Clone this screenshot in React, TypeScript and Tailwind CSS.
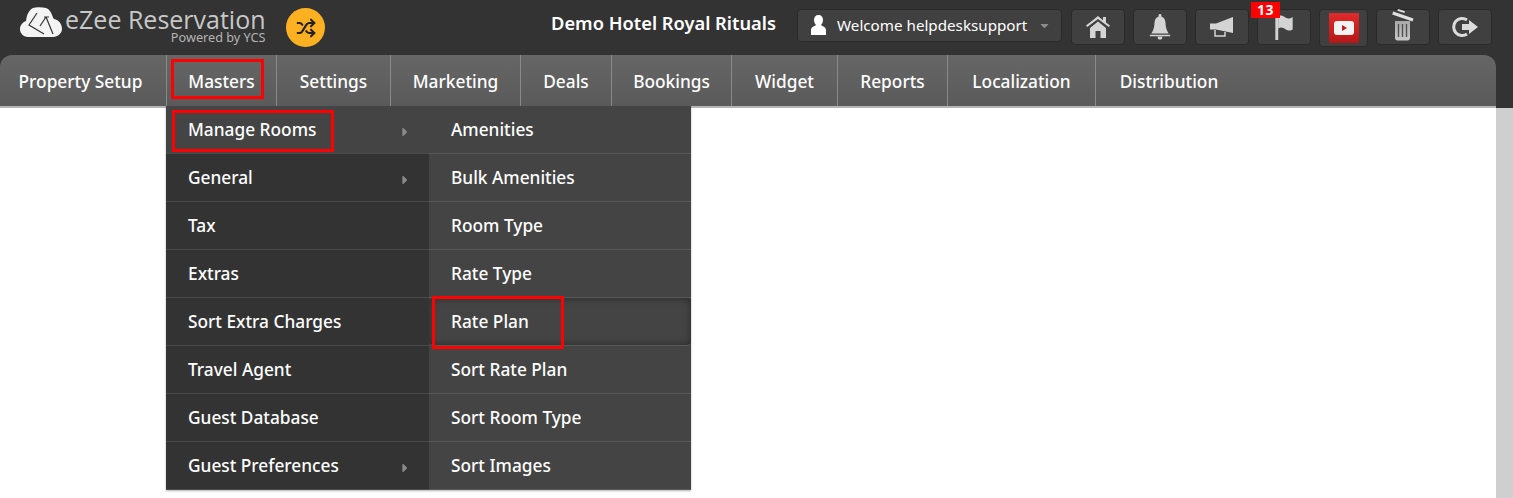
import { FaCaretRight, FaCaretDown } from 'react-icons/fa';
import { Shuffle } from 'lucide-react';

const navItems = [
  { label: 'Property Setup', width: 'w-[167px] pr-[5px]' },
  { label: 'Masters', width: 'w-[110px]' },
  { label: 'Settings', width: 'w-[114px]' },
  { label: 'Marketing', width: 'w-[130px]' },
  { label: 'Deals', width: 'w-[91px]' },
  { label: 'Bookings', width: 'w-[120px]' },
  { label: 'Widget', width: 'w-[106px]' },
  { label: 'Reports', width: 'w-[110px]' },
  { label: 'Localization', width: 'w-[148px]' },
  { label: 'Distribution', width: 'w-[146px]' },
];

const leftMenu = [
  { label: 'Manage Rooms', arrow: true },
  { label: 'General', arrow: true },
  { label: 'Tax' },
  { label: 'Extras' },
  { label: 'Sort Extra Charges' },
  { label: 'Travel Agent' },
  { label: 'Guest Database' },
  { label: 'Guest Preferences', arrow: true },
];

const rightMenu = ['Amenities', 'Bulk Amenities', 'Room Type', 'Rate Type', 'Rate Plan', 'Sort Rate Plan', 'Sort Room Type', 'Sort Images'];

function Logo() {
  return (
    <svg width="42" height="31" viewBox="0 0 42 31" fill="#f4f4f4">
      <path d="M8 30C3 30 0 26 0 22c0-4 3-7 6-8C7 7 9 3 13 1c3-1 9-1 13 0 3 1 5 4 6 7 1 2 1 3 2 4 5 1 8 5 8 10 0 4-4 8-9 8z" />
      <path d="M17 6 9 18l15 9M26 10l-6 9M26 10l7 17M24 10h5" stroke="#333" strokeWidth="1.200" fill="none" />
    </svg>
  );
}

function IconButton({ children }: { children: React.ReactNode }) {
  return (
    <button className="w-[54px] h-[36px] flex items-center justify-center rounded-[4px] bg-[#404040] border border-[#2a2a2a] text-[#d4d4d4]">
      {children}
    </button>
  );
}

export default function App() {
  return (
    <div className="relative w-[1513px] h-[498px] overflow-hidden bg-white font-['Noto_Sans','Open_Sans',sans-serif]">
      <div className="bg-[#333333] h-[108px]">
        <header className="h-[55px] flex items-start">
          <div className="ml-[20px] mt-[7px] flex items-start w-[266px]">
            <Logo />
            <div className="ml-[3px] flex flex-col items-end text-[#c8c8c8]">
              <span className="text-[25px] leading-[25px] font-['Open_Sans',sans-serif]">eZee Reservation</span>
              <span className="text-[12.700px] leading-[11px] text-[#b4b4b4]">Powered by YCS</span>
            </div>
          </div>
          <div className="mt-[8px] w-[39px] h-[39px] rounded-full bg-[#fdb022] flex items-center justify-center">
            <Shuffle size={20} strokeWidth={2.5} className="text-[#222]" />
          </div>
          <div className="ml-[226px] mt-[10px] w-[246px] text-[18.300px] leading-[26px] font-semibold text-white whitespace-nowrap">Demo Hotel Royal Rituals</div>
          <div className="mt-[9px] w-[265px] h-[33px] pb-[1px] flex items-center rounded-[4px] bg-[#404040] border border-[#2a2a2a] pl-[13px] text-white">
            <svg width="15" height="20" viewBox="0 0 15 20" fill="#ffffff">
              <path d="M7.500 0C10.500 0 12 2 12 5c0 2-1 4-2 5 1 1 5 2 5 5v5H0v-5c0-3 4-4 5-5-1-1-2-3-2-5 0-3 1.500-5 4.500-5z" />
            </svg>
            <span className="ml-[11px] text-[15.200px] whitespace-nowrap">Welcome helpdesksupport</span>
            <FaCaretDown size={13} className="ml-[11px] text-[#8c8c8c]" />
          </div>
          <div className="ml-[9px] mt-[9px] flex gap-[8px] items-start">
            <IconButton>
              <svg width="24" height="22" viewBox="0 0 24 22" fill="#d4d4d4">
                <path d="M12 0 0 9.500l1.200 1.500L12 3l10.800 8 1.200-1.500L20 6.500V1h-3v3.200z" />
                <path d="M4 12 12 5.500l8 6.500v10h-5.500v-7h-5v7H4z" />
              </svg>
            </IconButton>
            <IconButton>
              <svg width="22" height="26" viewBox="0 0 21 27" fill="#d4d4d4">
                <path d="M10.500 0c1 0 1.500.7 1.500 1.600v1.200c3 .8 4 3.200 4.200 6.200.2 4 .9 8 3.300 11.200H1.500C3.900 17 4.600 13 4.800 9c.2-3 1.200-5.400 4.200-6.200V1.600C9 .7 9.500 0 10.500 0z" />
                <path d="M0 21.500h21V23H0zM8 23.500h5c0 2-1 3-2.500 3S8 25.500 8 23.500z" />
              </svg>
            </IconButton>
            <IconButton>
              <svg width="24" height="20" viewBox="0 0 24 20" fill="#d4d4d4">
                <path d="M0 6.500h6L23 0v16L6 12.500H0z" />
                <path d="M5 13v6h10v-4" fill="none" stroke="#d4d4d4" strokeWidth="1.500" />
              </svg>
            </IconButton>
            <div className="relative">
              <IconButton>
                <svg width="18" height="26" viewBox="0 0 18 27" fill="#d4d4d4">
                  <path d="M0 2h3v25H0z" />
                  <path d="M3 3c3-3 5-1 8 1 2 1 4 1 7-1v13c-3 2-5 1-7 0-3-2-5-3-8-1z" />
                </svg>
              </IconButton>
              <span className="absolute left-[-6px] top-[-7px] w-[29px] h-[16px] bg-[#ff0000] text-white text-[14px] leading-[16px] font-bold tracking-[0.5px] text-center">13</span>
            </div>
            <button className="w-[49px] h-[38px] flex items-center justify-center rounded-[4px] bg-[#404040] border border-[#2a2a2a]">
              <span className="w-[30px] h-[30px] bg-gradient-to-b from-[#e02a2a] to-[#b51717] flex items-center justify-center">
                <svg width="20" height="14" viewBox="0 0 20 14">
                  <rect width="20" height="14" rx="3" fill="#f2f2f2" />
                  <path d="M8 4l5 3-5 3z" fill="#c41a1a" />
                </svg>
              </span>
            </button>
            <IconButton>
              <svg width="22" height="32" viewBox="0 0 22 32" className="-mt-[5px]">
                <defs>
                  <linearGradient id="can" x1="0" y1="0" x2="0" y2="1">
                    <stop offset="0" stopColor="#a8a8a8" />
                    <stop offset="1" stopColor="#c8c8c8" />
                  </linearGradient>
                </defs>
                <path d="M1.200 2.500 21.500 9.500l-1 3L.2 5.500zM6 0l7 2.300-.6 1.800-7-2.300z" fill="#e0e0e0" />
                <path d="M3 12h15v17c0 1.500-1 2.500-2.500 2.500h-10C4 31.500 3 30.500 3 29z" fill="url(#can)" />
                <path d="M6.500 15v13M10.500 15v13M14.500 15v13" stroke="#505050" strokeWidth="1.400" />
              </svg>
            </IconButton>
            <IconButton>
              <svg width="28" height="24" viewBox="0 0 28 24" fill="none">
                <path d="M16 5A8.500 8.500 0 1 0 16 19" stroke="#dcdcdc" strokeWidth="3" />
                <path d="M11 9h7V5l9 7-9 7v-4h-7z" fill="#dcdcdc" />
              </svg>
            </IconButton>
          </div>
        </header>

        <nav className="h-[53px] w-[1496px] flex rounded-t-[12px] bg-gradient-to-b from-[#666666] to-[#5a5a5a] border-b-2 border-[#b5b5b5]">
          {navItems.map((item, i) => (
            <div
              key={item.label}
              className={`${item.width} ${i === 9 ? '' : 'border-r border-[#8a8a8a]'} pt-[2px] flex items-center justify-center text-[17.300px] font-medium text-white whitespace-nowrap`}
            >
              {item.label}
            </div>
          ))}
        </nav>
      </div>

      <div className="absolute right-0 top-[108px] bottom-0 w-[17px] bg-[#cfcfcf]" />

      {/* red marker boxes from the annotated screenshot */}
      <div className="absolute left-[171px] top-[59px] w-[93px] h-[40px] border-[3px] border-[#ff0000] z-10" />

      <div className="absolute left-[166px] top-[106px] w-[525px] flex shadow-[0_1px_2px_rgba(0,0,0,0.3)]">
        <ul className="w-[263px] bg-[#333333]">
          {leftMenu.map((item, i) => (
            <li
              key={item.label}
              className={`h-[48px] pl-[22px] pr-[17px] flex items-center justify-between border-b border-[#4a4a4a] text-[17.300px] font-medium text-white ${i === 0 ? 'bg-[#444444]' : ''}`}
            >
              <span>{item.label}</span>
              {item.arrow && <FaCaretRight size={14} className="text-[#8c8c8c] mt-[5px]" />}
            </li>
          ))}
        </ul>
        <ul className="w-[262px] bg-[#444444]">
          {rightMenu.map((label) => (
            <li
              key={label}
              className={`h-[48px] pl-[22px] flex items-center border-b border-[#585858] text-[17.300px] font-medium text-white ${label === 'Rate Plan' ? 'rounded-[4px] shadow-[inset_0_0_8px_rgba(0,0,0,0.4)]' : ''}`}
            >
              {label}
            </li>
          ))}
        </ul>
        <div className="absolute left-[6px] top-[4px] w-[162px] h-[42px] border-[3px] border-[#ff0000]" />
        <div className="absolute left-[266px] top-[190px] w-[132px] h-[53px] border-[3px] border-[#ff0000]" />
      </div>
    </div>
  );
}
